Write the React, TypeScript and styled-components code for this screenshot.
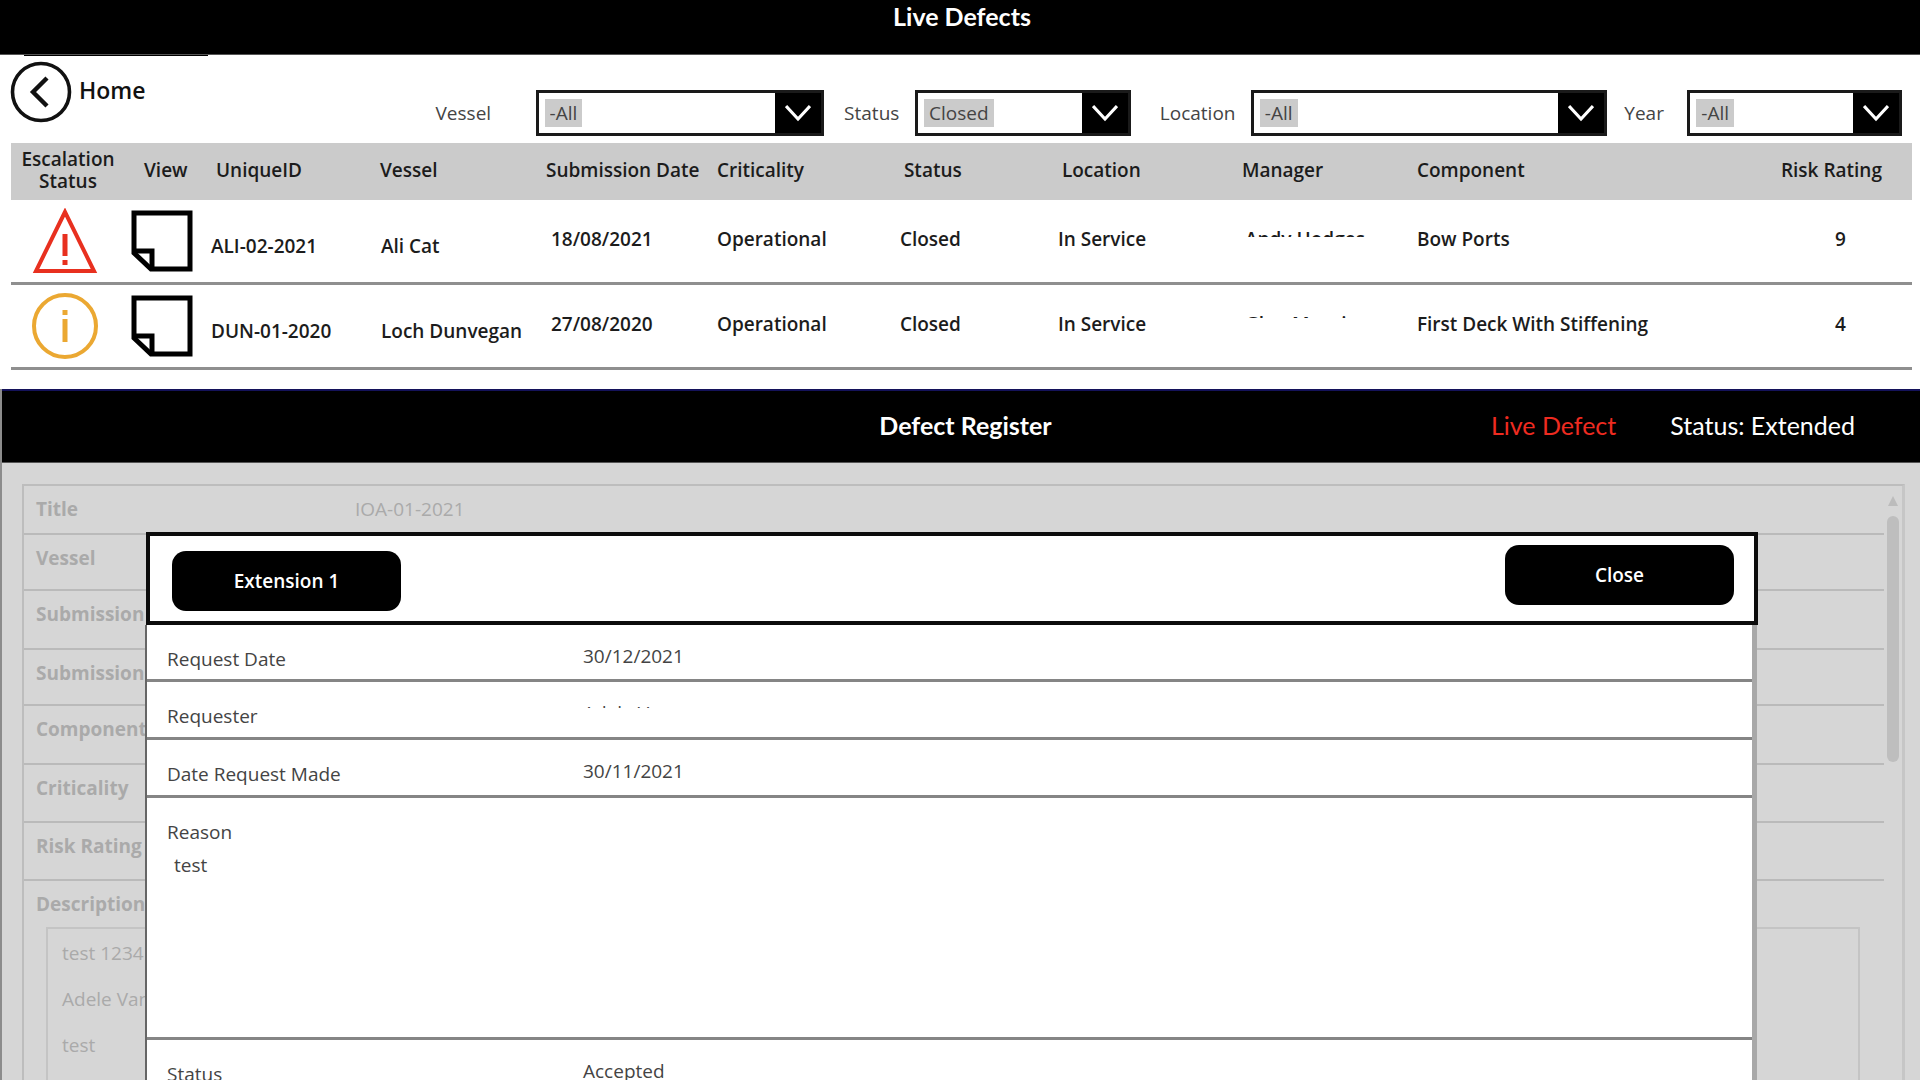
import React from "react";
import styled, { createGlobalStyle } from "styled-components";

const sans = `"Open Sans", "Noto Sans", sans-serif`;
const lato = `Lato, "Open Sans", sans-serif`;

const GlobalStyle = createGlobalStyle`
  *, *::before, *::after { box-sizing: border-box; }
  html, body, #root { height: 100%; margin: 0; }
  body { background: #fff; color: #1c1c1c; font: 600 19px/24px ${sans}; overflow: hidden; }
  button, select, input { font: inherit; color: inherit; }
`;

const Page = styled.div`
  display: flex;
  flex-direction: column;
  height: 100vh;
`;

const TopBar = styled.header`
  height: 55px;
  flex: none;
  display: flex;
  justify-content: center;
  padding: 0 0 0 4px;
  background: #000;
  border-bottom: 1px solid #555;
`;

const BarTitle = styled.h1`
  margin: 0;
  font: 700 25px/32px ${lato};
  color: #fff;
`;

const Tab = styled.div`
  width: 184px;
  height: 1px;
  margin-left: 24px;
  background: #000;
`;

const Toolbar = styled.div`
  display: flex;
  align-items: flex-start;
  height: 87px;
  flex: none;
  padding: 5px 18px 0 10px;
`;

const HomeLink = styled.a`
  display: flex;
  align-items: center;
  gap: 7px;
  color: #111;
  text-decoration: none;
  font-size: 23px;
  line-height: 32px;
`;

const HomeText = styled.span`
  padding-bottom: 4px;
`;

const Filters = styled.form`
  flex: 1;
  display: grid;
  grid-template-columns: 100px 289fr 91px 216fr 120px 357fr 80px 215fr;
  align-items: center;
  margin: 29px 0 0 290px;
`;

const FilterLabel = styled.label<{ $inset: number }>`
  padding-left: ${(p) => p.$inset}px;
  font-weight: 400;
  color: #444;
`;

const SelectBox = styled.div`
  display: flex;
  height: 46px;
  border: 3px solid #1a1a1a;
  background: #fff;
`;

const Select = styled.select`
  appearance: none;
  field-sizing: content;
  align-self: center;
  margin: 0 auto 0 6px;
  height: 28px;
  padding: 0 5px;
  border: 0;
  border-radius: 0;
  background: #cbcbcb;
  color: #444;
  font-weight: 400;
`;

const SelectArrow = styled.span`
  width: 46px;
  display: grid;
  place-items: center;
  background: #000;
  pointer-events: none;
`;

const TableWrap = styled.div`
  flex: none;
  height: 246px;
  padding: 0 8px 0 11px;
`;

const Table = styled.table`
  width: 100%;
  table-layout: fixed;
  border-collapse: separate;
  border-spacing: 0;
`;

const Th = styled.th<{ $center?: boolean; $inset?: number }>`
  height: 57px;
  padding: 0 ${(p) => (p.$center ? 2 : 0)}px 3px ${(p) => p.$inset ?? 0}px;
  background: #cbcbcb;
  font-weight: 600;
  line-height: 22px;
  text-align: ${(p) => (p.$center ? "center" : "left")};
  white-space: nowrap;
`;

const Td = styled.td<{ $inset?: number }>`
  height: 85px;
  padding: 0 0 4px ${(p) => p.$inset ?? 0}px;
  border-bottom: 3px solid #8f8f8f;
  white-space: nowrap;
  vertical-align: middle;
`;

const LowTd = styled(Td)`
  padding-top: 10px;
  padding-bottom: 0;
`;

const IconTd = styled(Td)`
  padding-bottom: 0;
  svg { display: block; }
`;

const IconButton = styled.button`
  display: block;
  padding: 0;
  border: 0;
  background: none;
`;

const Clipped = styled.span<{ $visible: number }>`
  display: block;
  height: ${(p) => p.$visible}px;
  margin-bottom: ${(p) => 24 - p.$visible}px;
  overflow: hidden;
`;

const Register = styled.section`
  flex: 1;
  min-height: 0;
  display: flex;
  flex-direction: column;
  overflow: hidden;
  border-left: 2px solid #8c8c8c;
  background: #d6d6d6;
`;

const RegisterBar = styled.header`
  flex: none;
  height: 74px;
  display: grid;
  grid-template-columns: 1fr auto 1fr;
  align-items: center;
  padding: 0 65px 4px 74px;
  background: #000;
  border-top: 2px solid #14125a;
  border-bottom: 1px solid #555;
`;

const RegisterState = styled.div`
  display: flex;
  justify-content: flex-end;
  gap: 54px;
  font: 400 25px/32px ${lato};
  color: #fff;
`;

const LiveFlag = styled.span`
  color: #ee2b20;
`;

const Stage = styled.div`
  flex: 1;
  min-height: 0;
  display: grid;
  overflow: hidden;
  padding: 21px 15px 0 20px;
`;

const FormPanel = styled.div`
  grid-area: 1 / 1;
  display: flex;
  border: 2px solid #bdbdbd;
  border-right: 3px solid #c6c6c6;
  border-bottom: 0;
  color: #aaa;
  min-height: 0;
`;

const FormRows = styled.div`
  flex: 1;
`;

const FormRow = styled.div<{ $h: number }>`
  display: grid;
  grid-template-columns: 319px 1fr;
  height: ${(p) => p.$h}px;
  padding: 11px 0 0 12px;
  border-bottom: 2px solid #bababa;
  font-weight: 700;
`;

const FormValue = styled.span`
  font-weight: 400;
`;

const Description = styled.div`
  padding: 11px 24px 0 12px;
  font-weight: 700;
`;

const Notes = styled.div`
  height: 200px;
  margin: 11px 0 0 10px;
  padding: 1px 14px;
  border: 2px solid #c4c4c4;
  font-weight: 400;
  line-height: 46px;
  p { margin: 0; }
`;

const ScrollTrack = styled.div`
  width: 18px;
  display: flex;
  flex-direction: column;
  align-items: center;
  gap: 10px;
  padding-top: 10px;
`;

const ScrollThumb = styled.div`
  width: 12px;
  height: 246px;
  border-radius: 6px;
  background: #bebebe;
`;

const Dialog = styled.div`
  grid-area: 1 / 1;
  position: relative;
  margin: 48px 147px 0 123px;
  color: #444;
  font-weight: 400;
`;

const DialogHead = styled.div`
  display: flex;
  justify-content: space-between;
  height: 93px;
  margin: 0 0 0 1px;
  padding: 9px 20px 0 22px;
  border: 4px solid #0c0c0c;
  background: #fff;
`;

const DialogButton = styled.button<{ $drop?: boolean }>`
  width: 229px;
  height: 60px;
  margin-top: ${(p) => (p.$drop ? 6 : 0)}px;
  border: 0;
  border-radius: 14px;
  background: #000;
  color: #fff;
  font-weight: 600;
`;

const DialogBody = styled.dl`
  margin: 0 1px 0 0;
  border-left: 2px solid #666;
  border-right: 5px solid #a8a8a8;
  background: #fff;
`;

const DialogRow = styled.div<{ $h: number }>`
  display: grid;
  grid-template-columns: 416px 1fr;
  align-content: start;
  height: ${(p) => p.$h}px;
  padding: 22px 0 0 20px;
  border-bottom: 3px solid #858585;
  dt, dd { margin: 0; }
`;

const DialogValue = styled.dd`
  && { margin-top: -3px; }
`;

const Reason = styled.dd`
  && { grid-column: 1; margin: 9px 0 0 7px; }
`;

const BackIcon = () => (
  <svg width="62" height="62" viewBox="0 0 62 62" fill="none" stroke="#111" aria-hidden="true">
    <circle cx="31" cy="31" r="28.5" strokeWidth="3.6" />
    <path d="M37 17 23 31l14 14" strokeWidth="4.4" />
  </svg>
);

const Chevron = () => (
  <svg width="26" height="18" viewBox="0 0 26 18" fill="none" stroke="#fff" strokeWidth="3.2" aria-hidden="true">
    <path d="M1 2l12 13L25 2" />
  </svg>
);

const AlertIcon = () => (
  <svg width="66" height="66" viewBox="0 0 66 66" fill="none" stroke="#e8301f" aria-label="Escalated">
    <path d="M33 4 4 63h58Z" strokeWidth="4" />
    <path d="M33 26v22M33 52v5" strokeWidth="5" />
  </svg>
);

const InfoIcon = () => (
  <svg width="66" height="66" viewBox="0 0 66 66" fill="none" stroke="#eba832" aria-label="Information">
    <circle cx="33" cy="33" r="31" strokeWidth="4" />
    <path d="M33 17v5M33 26v23" strokeWidth="5" />
  </svg>
);

const NoteIcon = () => (
  <svg width="62" height="62" viewBox="0 0 62 62" fill="none" stroke="#000" strokeWidth="5" aria-hidden="true">
    <path d="M3 3h56v56H20L3 43Z" />
    <path d="M3 41h18v18" />
  </svg>
);

const filters = [
  { id: "vessel", label: "Vessel", value: "-All", inset: 0 },
  { id: "status", label: "Status", value: "Closed", inset: 20 },
  { id: "location", label: "Location", value: "-All", inset: 29 },
  { id: "year", label: "Year", value: "-All", inset: 17 },
];

const columns = [116, 84, 169, 166, 171, 183, 158, 184, 175, 347, 148];

const defects = [
  { icon: <AlertIcon />, id: "ALI-02-2021", vessel: "Ali Cat", date: "18/08/2021", manager: "Andy Hodges", visible: 10, component: "Bow Ports", risk: 9 },
  { icon: <InfoIcon />, id: "DUN-01-2020", vessel: "Loch Dunvegan", date: "27/08/2020", manager: "Glen Mornis", visible: 6, component: "First Deck With Stiffening", risk: 4 },
];

const formRows: [string, string, number][] = [
  ["Title", "IOA-01-2021", 49],
  ["Vessel", "", 56],
  ["Submission Date", "", 59],
  ["Submission By", "", 56],
  ["Component", "", 59],
  ["Criticality", "", 58],
  ["Risk Rating", "", 58],
];

export default function App() {
  return (
    <>
      <GlobalStyle />
      <Page>
        <TopBar><BarTitle>Live Defects</BarTitle></TopBar>
        <Tab />
        <Toolbar>
          <HomeLink href="#home"><BackIcon /><HomeText>Home</HomeText></HomeLink>
          <Filters>
            {filters.map((f) => (
              <React.Fragment key={f.id}>
                <FilterLabel htmlFor={f.id} $inset={f.inset}>{f.label}</FilterLabel>
                <SelectBox>
                  <Select id={f.id} defaultValue={f.value}><option>{f.value}</option></Select>
                  <SelectArrow><Chevron /></SelectArrow>
                </SelectBox>
              </React.Fragment>
            ))}
          </Filters>
        </Toolbar>
        <TableWrap>
          <Table>
            <colgroup>{columns.map((w, i) => <col key={i} style={{ width: `${w / 19.01}%` }} />)}</colgroup>
            <thead>
              <tr>
                <Th $center>Escalation<br />Status</Th>
                <Th $inset={17}>View</Th>
                <Th $inset={5}>UniqueID</Th>
                <Th>Vessel</Th>
                <Th>Submission Date</Th>
                <Th>Criticality</Th>
                <Th $inset={4}>Status</Th>
                <Th $inset={4}>Location</Th>
                <Th>Manager</Th>
                <Th>Component</Th>
                <Th $inset={17}>Risk Rating</Th>
              </tr>
            </thead>
            <tbody>
              {defects.map((d) => (
                <tr key={d.id}>
                  <IconTd $inset={21}>{d.icon}</IconTd>
                  <IconTd $inset={4}><IconButton type="button" aria-label={`View ${d.id}`}><NoteIcon /></IconButton></IconTd>
                  <LowTd>{d.id}</LowTd>
                  <LowTd $inset={1}>{d.vessel}</LowTd>
                  <Td $inset={5}>{d.date}</Td>
                  <Td>Operational</Td>
                  <Td>Closed</Td>
                  <Td>In Service</Td>
                  <Td $inset={3}><Clipped $visible={d.visible}>{d.manager}</Clipped></Td>
                  <Td>{d.component}</Td>
                  <Td $inset={71}>{d.risk}</Td>
                </tr>
              ))}
            </tbody>
          </Table>
        </TableWrap>
        <Register>
          <RegisterBar>
            <span />
            <BarTitle as="h2">Defect Register</BarTitle>
            <RegisterState><LiveFlag>Live Defect</LiveFlag><span>Status: Extended</span></RegisterState>
          </RegisterBar>
          <Stage>
            <FormPanel>
              <FormRows>
                {formRows.map(([label, value, h]) => (
                  <FormRow key={label} $h={h}><span>{label}</span><FormValue>{value}</FormValue></FormRow>
                ))}
                <Description>
                  Description
                  <Notes><p>test 1234</p><p>Adele Van</p><p>test</p></Notes>
                </Description>
              </FormRows>
              <ScrollTrack>
                <svg width="10" height="10" viewBox="0 0 10 10" aria-hidden="true"><path d="M5 0l5 10H0Z" fill="#bcbcbc" /></svg>
                <ScrollThumb />
              </ScrollTrack>
            </FormPanel>
            <Dialog role="dialog" aria-label="Extension 1">
              <DialogHead>
                <DialogButton type="button" $drop>Extension 1</DialogButton>
                <DialogButton type="button">Close</DialogButton>
              </DialogHead>
              <DialogBody>
                <DialogRow $h={57}><dt>Request Date</dt><DialogValue>30/12/2021</DialogValue></DialogRow>
                <DialogRow $h={58}><dt>Requester</dt><DialogValue><Clipped $visible={7}>Adele Van</Clipped></DialogValue></DialogRow>
                <DialogRow $h={58}><dt>Date Request Made</dt><DialogValue>30/11/2021</DialogValue></DialogRow>
                <DialogRow $h={242}><dt>Reason</dt><Reason>test</Reason></DialogRow>
                <DialogRow $h={58}><dt>Status</dt><DialogValue>Accepted</DialogValue></DialogRow>
              </DialogBody>
            </Dialog>
          </Stage>
        </Register>
      </Page>
    </>
  );
}
